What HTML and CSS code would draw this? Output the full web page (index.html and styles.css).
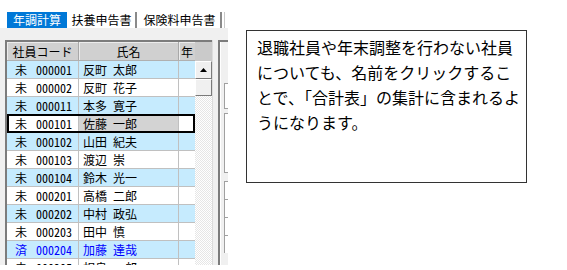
FILE: index.html
```html
<!DOCTYPE html>
<html lang="ja">

<head>
    <meta charset="UTF-8">
    <title>年調計算</title>
    <link rel="stylesheet" href="styles.css">
</head>

<body>
    <div class="page">
        <div class="win">
            <div class="tabs">
                <div class="tab tab-active">年調計算</div>
                <div class="tab tab-2">扶養申告書</div>
                <div class="tab tab-3">保険料申告書</div>
                <div class="tab tab-cut"></div>
            </div>
            <div class="band"></div>

            <div class="main">
                <div class="grid">
                    <div class="table">
                        <div class="row head">
                            <div class="cell c-code">社員コード</div>
                            <div class="cell c-name">氏名</div>
                            <div class="cell c-year">年</div>
                        </div>
                        <div class="row alt">
                            <div class="cell c-code"><span class="st">未</span><span class="num">000001</span></div>
                            <div class="cell c-name"><span class="sei">反町</span><span>太郎</span></div>
                            <div class="cell c-year"></div>
                        </div>
                        <div class="row">
                            <div class="cell c-code"><span class="st">未</span><span class="num">000002</span></div>
                            <div class="cell c-name"><span class="sei">反町</span><span>花子</span></div>
                            <div class="cell c-year"></div>
                        </div>
                        <div class="row alt">
                            <div class="cell c-code"><span class="st">未</span><span class="num">000011</span></div>
                            <div class="cell c-name"><span class="sei">本多</span><span>寛子</span></div>
                            <div class="cell c-year"></div>
                        </div>
                        <div class="row selected">
                            <div class="cell c-code"><span class="st">未</span><span class="num">000101</span></div>
                            <div class="cell c-name"><span class="sei">佐藤</span><span>一郎</span></div>
                            <div class="cell c-year"></div>
                        </div>
                        <div class="row alt">
                            <div class="cell c-code"><span class="st">未</span><span class="num">000102</span></div>
                            <div class="cell c-name"><span class="sei">山田</span><span>紀夫</span></div>
                            <div class="cell c-year"></div>
                        </div>
                        <div class="row">
                            <div class="cell c-code"><span class="st">未</span><span class="num">000103</span></div>
                            <div class="cell c-name"><span class="sei">渡辺</span><span>崇</span></div>
                            <div class="cell c-year"></div>
                        </div>
                        <div class="row alt">
                            <div class="cell c-code"><span class="st">未</span><span class="num">000104</span></div>
                            <div class="cell c-name"><span class="sei">鈴木</span><span>光一</span></div>
                            <div class="cell c-year"></div>
                        </div>
                        <div class="row">
                            <div class="cell c-code"><span class="st">未</span><span class="num">000201</span></div>
                            <div class="cell c-name"><span class="sei">高橋</span><span>二郎</span></div>
                            <div class="cell c-year"></div>
                        </div>
                        <div class="row alt">
                            <div class="cell c-code"><span class="st">未</span><span class="num">000202</span></div>
                            <div class="cell c-name"><span class="sei">中村</span><span>政弘</span></div>
                            <div class="cell c-year"></div>
                        </div>
                        <div class="row">
                            <div class="cell c-code"><span class="st">未</span><span class="num">000203</span></div>
                            <div class="cell c-name"><span class="sei">田中</span><span>慎</span></div>
                            <div class="cell c-year"></div>
                        </div>
                        <div class="row alt done">
                            <div class="cell c-code"><span class="st">済</span><span class="num">000204</span></div>
                            <div class="cell c-name"><span class="sei">加藤</span><span>達哉</span></div>
                            <div class="cell c-year"></div>
                        </div>
                        <div class="row">
                            <div class="cell c-code"><span class="st">未</span><span class="num">000205</span></div>
                            <div class="cell c-name"><span class="sei">相良</span><span>一郎</span></div>
                            <div class="cell c-year"></div>
                        </div>
                    </div>

                    <div class="vscroll">
                        <div class="vs-head"></div>
                        <div class="vs-btn">
                            <svg width="7" height="4" viewBox="0 0 7 4"><polygon points="0,4 7,4 3.5,0" fill="#000"/></svg>
                        </div>
                        <div class="vs-thumb"></div>
                        <div class="vs-track"></div>
                    </div>
                </div>

                <div class="split"></div>

                <div class="side">
                    <div class="side-top"></div>
                    <div class="box box-a"></div>
                    <div class="box box-b"></div>
                    <div class="box box-c"></div>
                    <div class="box box-c"></div>
                    <div class="box box-c"></div>
                    <div class="box box-c"></div>
                </div>
            </div>
        </div>

        <div class="note">
            <p>退職社員や年末調整を行わない社員<br>についても、名前をクリックするこ<br>とで、「合計表」の集計に含まれるよ<br>うになります。</p>
        </div>
    </div>
</body>

</html>
```

FILE: styles.css
```css
body {
    margin: 0;
    background: #fff;
    font-family: "Noto Sans CJK JP", sans-serif;
    font-size: 12px;
    color: #000;
}

.page {
    display: flex;
    align-items: flex-start;
    padding-top: 12px;
}

/* left window */
.win {
    width: 228px;
    flex-shrink: 0;
}

.tabs {
    display: flex;
    height: 16px;
    padding-left: 7px;
}

.tab {
    box-sizing: border-box;
    height: 16px;
    line-height: 16px;
    text-align: center;
    background: #fff;
    white-space: nowrap;
}

.tab-active {
    width: 60px;
    background: #0078d7;
    color: #fff;
}

.tab-2 {
    width: 69px;
    margin-left: 1px;
    border-right: 2px solid #8a8a8a;
}

.tab-3 {
    width: 83px;
    margin-left: 2px;
    border-right: 2px solid #8a8a8a;
}

.tab-cut {
    flex: 1;
    margin-left: 2px;
    border-left: 1px solid #c8c8c8;
}

.band {
    height: 12px;
    background: #f0f0f0;
}

.main {
    display: flex;
    height: 225px;
    padding-left: 5px;
    background: #f0f0f0;
}

.grid {
    display: flex;
    border-top: 2px solid #7c7c7c;
    border-left: 2px solid #7c7c7c;
    overflow: hidden;
}

.table {
    width: 188px;
}

.row {
    position: relative;
    display: flex;
    box-sizing: border-box;
    height: 18px;
    border-bottom: 1px solid #c0c0c0;
    background: #fff;
}

.row.alt {
    background: #c6ebfe;
}

.row.head {
    height: 19px;
    background: #d0d0d0;
    border-bottom: 1px solid #b0b0b0;
}

.cell {
    display: flex;
    align-items: center;
    box-sizing: border-box;
    line-height: 17px;
    white-space: nowrap;
    overflow: hidden;
}

.c-code {
    width: 72px;
    padding-left: 8px;
    border-right: 1px solid #c0c0c0;
}

.c-name {
    width: 100px;
    padding-left: 4px;
    border-right: 1px solid #c0c0c0;
}

.c-year {
    width: 16px;
    padding-left: 2px;
}

.head .cell {
    justify-content: center;
    border-right: 1px solid #a8a8a8;
    box-shadow: inset 1px 1px 0 #ececec;
}

.head .c-code {
    padding-left: 0;
}

.head .c-name {
    padding-left: 0;
}

.head .c-year {
    justify-content: flex-start;
    border-right: none;
}

.st {
    margin-right: 9px;
}

.num {
    font-feature-settings: "hwid";
}

.sei {
    margin-right: 6px;
}

.row.selected .c-name {
    background: #d3d3d3;
}

.row.selected::after {
    content: "";
    position: absolute;
    top: -1px;
    left: 0;
    right: 0;
    bottom: -1px;
    border: 2px solid #000;
}

.row.done {
    color: #0000ff;
}

/* vertical scrollbar */
.vscroll {
    width: 17px;
    display: flex;
    flex-direction: column;
}

.vs-head {
    height: 19px;
    background: #cacaca;
}

.vs-btn,
.vs-thumb {
    box-sizing: border-box;
    background: #f0f0f0;
    border-top: 1px solid #fff;
    border-left: 1px solid #fff;
    border-right: 1px solid #7a7a7a;
    border-bottom: 1px solid #7a7a7a;
}

.vs-btn {
    height: 18px;
    display: flex;
    align-items: center;
    justify-content: center;
}

.vs-thumb {
    height: 17px;
}

.vs-track {
    flex: 1;
    background-color: #fff;
    background-image: repeating-conic-gradient(#e6e6e6 0 25%, #fff 0 50%);
    background-size: 2px 2px;
}

.split {
    width: 5px;
    border-left: 1px solid #dcdcdc;
}

.side {
    flex: 1;
    box-sizing: border-box;
    border-left: 2px solid #7c7c7c;
    border-top: 2px solid #7c7c7c;
    padding-left: 4px;
    box-shadow: inset 1px 0 0 #fff;
}

.side-top {
    height: 41px;
}

.box {
    box-sizing: border-box;
    border: 1px solid #a0a0a0;
    border-right: none;
    background: #fff;
}

.box-a {
    height: 26px;
    margin-bottom: 4px;
}

.box-b {
    height: 60px;
    margin-bottom: 8px;
}

.box-c {
    height: 18px;
    border-bottom: none;
}

/* callout */
.note {
    box-sizing: border-box;
    width: 281px;
    height: 153px;
    margin-left: 18px;
    margin-top: 18px;
    border: 1px solid #333;
    background: #fff;
    padding: 4px 0 0 10px;
}

.note p {
    margin: 0;
    font-size: 16px;
    line-height: 25px;
    white-space: nowrap;
}
```
